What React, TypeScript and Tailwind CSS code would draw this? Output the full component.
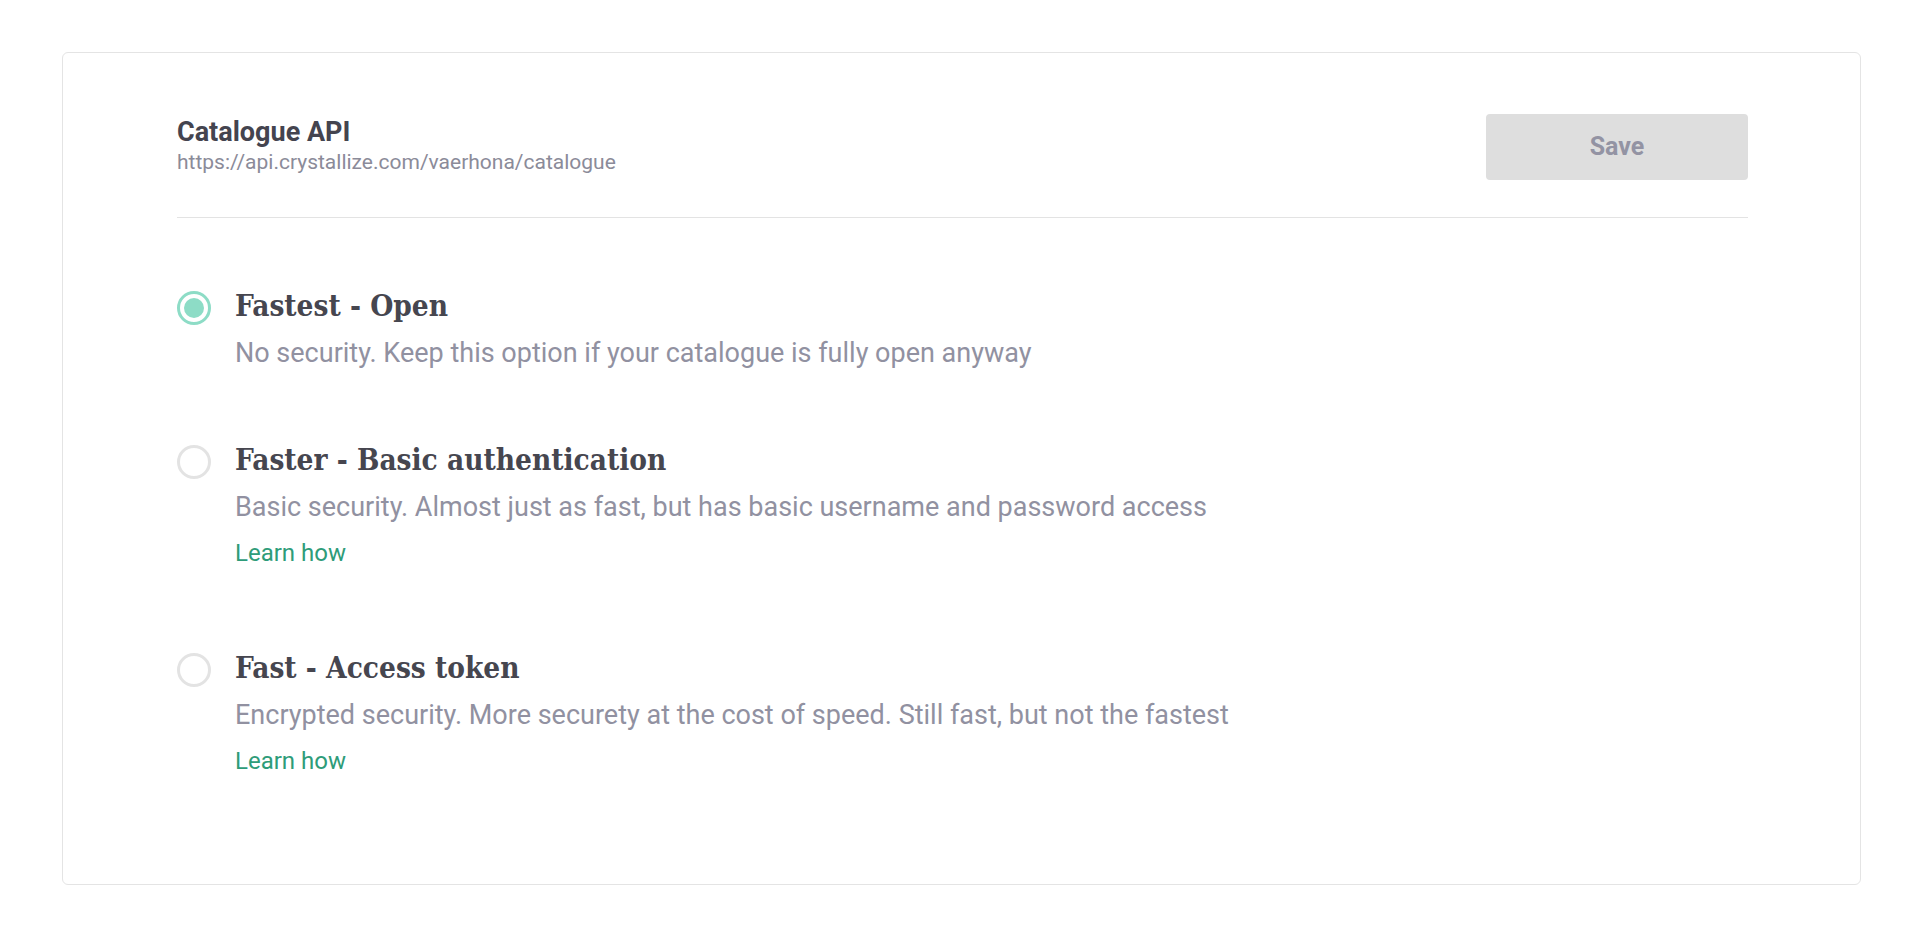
import React from 'react';

type Option = {
    title: string;
    description: string;
    learn?: boolean;
    selected?: boolean;
};

const options: Option[] = [
    {
        title: 'Fastest - Open',
        description: 'No security. Keep this option if your catalogue is fully open anyway',
        selected: true,
    },
    {
        title: 'Faster - Basic authentication',
        description: 'Basic security. Almost just as fast, but has basic username and password access',
        learn: true,
    },
    {
        title: 'Fast - Access token',
        description: 'Encrypted security. More securety at the cost of speed. Still fast, but not the fastest',
        learn: true,
    },
];

const Radio: React.FC<{ selected?: boolean }> = ({ selected }) => (
    <div
        className={
            selected
                ? 'mt-[3px] h-[34px] w-[34px] shrink-0 rounded-full border-[3px] border-[#8ddcc6] flex items-center justify-center'
                : 'mt-[3px] h-[34px] w-[34px] shrink-0 rounded-full border-[3px] border-[#e3e3e3]'
        }
    >
        {selected && <div className="h-[20px] w-[20px] rounded-full bg-[#8ddcc6]" />}
    </div>
);

const App: React.FC = () => {
    return (
        <div className="min-h-screen w-full bg-white pl-[62px] pr-[50px] pt-[52px] font-['Roboto',sans-serif]">
            <div className="rounded-[6px] border border-[#e4e4e4] pl-[114px] pr-[112px] pt-[61px] pb-[108px]">
                <header className="flex items-center justify-between">
                    <div>
                        <h1 className="text-[27px] leading-[30px] font-bold text-[#44444f]">Catalogue API</h1>
                        <p className="text-[21px] leading-[30px] text-[#8b8b99]">
                            https://api.crystallize.com/vaerhona/catalogue
                        </p>
                    </div>
                    <button className="h-[66px] w-[262px] rounded-[4px] bg-[#dedede] text-[25px] font-bold text-[#9393a3]">
                        Save
                    </button>
                </header>

                <div className="mt-[37px] h-px bg-[#e3e3e3]" />

                <div className="mt-[70px] flex flex-col">
                    {options.map((o, i) => (
                        <div key={o.title} className={i === 0 ? 'flex gap-[24px]' : i === 1 ? 'mt-[74px] flex gap-[24px]' : 'mt-[82px] flex gap-[24px]'}>
                            <Radio selected={o.selected} />
                            <div className="flex flex-col">
                                <h2 className="font-['DejaVu_Serif_Condensed','DejaVu_Serif',serif] text-[29.5px] leading-[36px] font-bold text-[#46464f]">
                                    {o.title}
                                </h2>
                                <p className="mt-[14px] text-[27px] leading-[30px] text-[#9191a1]">{o.description}</p>
                                {o.learn && (
                                    <a href="#" className="mt-[16px] text-[24px] leading-[30px] text-[#2e9c79]">
                                        Learn how
                                    </a>
                                )}
                            </div>
                        </div>
                    ))}
                </div>
            </div>
        </div>
    );
};

export default App;
